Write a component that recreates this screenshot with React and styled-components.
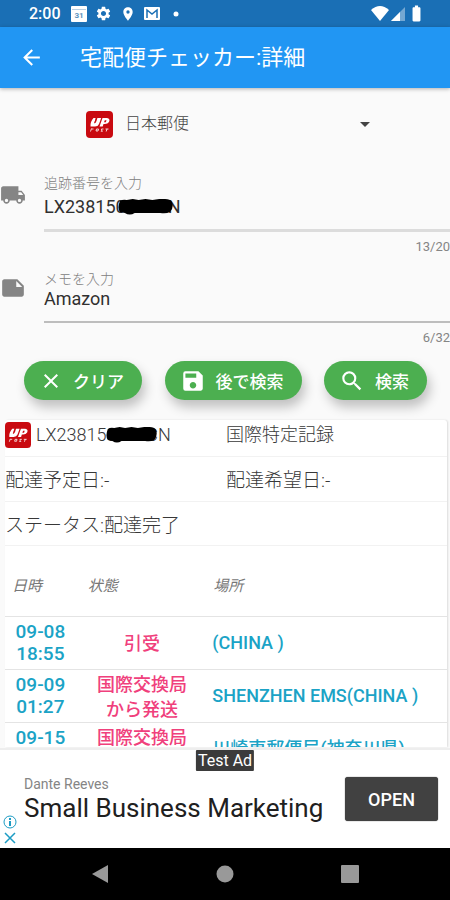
import React, { useState } from "react";
import styled, { createGlobalStyle } from "styled-components";
import {
  MdArrowBack,
  MdArrowDropDown,
  MdBatteryFull,
  MdClose,
  MdLocalShipping,
  MdLocationOn,
  MdNote,
  MdSave,
  MdSearch,
  MdSettings,
} from "react-icons/md";

const GlobalStyle = createGlobalStyle`
  * { box-sizing: border-box; }
  body {
    margin: 0;
    background: #fafafa;
    color: #303030;
    font-family: Roboto, "Noto Sans CJK JP", sans-serif;
  }
  button, input, select { font: inherit; }
`;

const Screen = styled.div`
  display: flex;
  flex-direction: column;
  height: 100vh;
  overflow: hidden;
`;

const StatusBar = styled.div`
  display: flex;
  align-items: center;
  flex: none;
  gap: 8px;
  height: 27px;
  padding: 0 24px 0 29px;
  background: #1a6fb5;
  color: #fff;
`;

const Clock = styled.time`
  margin-right: 2px;
  font-size: 16px;
  font-weight: 500;
`;

const StatusIcons = styled.div`
  display: flex;
  align-items: center;
  gap: ${(p) => p.$gap}px;
  margin-left: ${(p) => (p.$end ? "auto" : "0")};
  svg { display: block; }
`;

const AppBar = styled.header`
  display: flex;
  align-items: center;
  flex: none;
  gap: 36px;
  height: 61px;
  padding: 0 19px;
  background: #2196f3;
  color: #fff;
  box-shadow: 0 1px 4px rgba(0, 0, 0, 0.3);
`;

const IconButton = styled.button`
  display: flex;
  padding: 0;
  border: 0;
  background: none;
  color: inherit;
`;

const Title = styled.h1`
  margin: 0;
  font-size: 22px;
  font-weight: 400;
  line-height: 32px;
`;

const CarrierRow = styled.div`
  display: flex;
  align-items: center;
  flex: none;
  gap: 12px;
  height: 72px;
  padding: 0 73px 0 86px;
`;

const SelectBox = styled.div`
  display: grid;
  flex: 1;
  align-items: center;
  > * { grid-area: 1 / 1; }
  svg {
    justify-self: end;
    color: #444;
    pointer-events: none;
  }
`;

const CarrierSelect = styled.select`
  width: 100%;
  padding: 0;
  border: 0;
  background: none;
  color: #444;
  appearance: none;
  font-size: 16px;
  font-weight: 300;
  line-height: 24px;
`;

const FieldRow = styled.div`
  display: grid;
  grid-template-columns: 28px 1fr;
  column-gap: 16px;
  flex: none;
  padding-top: 14px;
`;

const FieldIcon = styled.span`
  padding-top: ${(p) => p.$top}px;
  color: #858585;
  svg { display: block; }
`;

const FieldBody = styled.div`
  display: flex;
  flex-direction: column;
`;

const FieldLabel = styled.label`
  color: #808080;
  font-size: 14px;
  font-weight: 300;
  line-height: 18px;
`;

const InputWrap = styled.div`
  position: relative;
  padding: ${(p) => p.$top}px 0 13px;
  border-bottom: ${(p) => (p.$thick ? "3px solid #dcdcdc" : "2px solid #bdbdbd")};
`;

const TextInput = styled.input`
  display: block;
  width: 100%;
  height: 20px;
  padding: 0;
  border: 0;
  outline: 0;
  background: none;
  color: #303030;
  font-size: 18px;
`;

const Counter = styled.span`
  align-self: flex-end;
  margin-top: 6px;
  color: #858585;
  font-size: 13px;
  line-height: 18px;
`;

const Scribble = styled.svg`
  position: absolute;
  top: ${(p) => p.$top}px;
  left: ${(p) => p.$left}px;
`;

const Actions = styled.div`
  display: flex;
  justify-content: space-between;
  flex: none;
  padding: 14px 23px 20px 24px;
`;

const ActionButton = styled.button`
  display: flex;
  align-items: center;
  gap: 10px;
  height: 39px;
  padding: 0 18px 0 15px;
  border: 0;
  border-radius: 20px;
  background: #4caf50;
  color: #fff;
  font-size: 17px;
  font-weight: 500;
  box-shadow: 3px 7px 12px rgba(0, 0, 0, 0.24);
`;

const Card = styled.main`
  flex: 1;
  min-height: 0;
  margin: 0 3px 1px 5px;
  overflow: hidden;
  border-radius: 3px 3px 0 0;
  background: #fff;
  box-shadow: 1px 0 2px rgba(0, 0, 0, 0.12);
`;

const InfoRow = styled.div`
  display: grid;
  grid-template-columns: 1fr 1fr;
  align-items: center;
  height: ${(p) => p.$height}px;
  padding-top: ${(p) => (p.$first ? 0 : 4)}px;
  padding-bottom: ${(p) => (p.$first ? 6 : 0)}px;
  border-bottom: 1px solid #f2f2f2;
  color: #383838;
  font-size: ${(p) => (p.$first ? 18 : 19)}px;
  font-weight: 300;
  line-height: 28px;
`;

const Parcel = styled.div`
  position: relative;
  display: flex;
  align-items: center;
  gap: 5px;
  height: 28px;
  font-size: 18px;
`;

const History = styled.table`
  width: 100%;
  table-layout: fixed;
  border-collapse: collapse;
`;

const Heading = styled.th`
  width: ${(p) => p.$width};
  height: 70px;
  padding: 8px 0 0 ${(p) => p.$left}px;
  border-bottom: 1px solid #e4e4e4;
  color: #777;
  font-size: 15px;
  font-style: italic;
  font-weight: 400;
  text-align: left;
`;

const Cell = styled.td`
  height: 53px;
  padding: ${(p) => p.$drop || 0}px ${(p) => p.$pad}px 0;
  border-bottom: 1px solid #e4e4e4;
  color: ${(p) => p.$color};
  font-size: ${(p) => p.$size}px;
  font-weight: 500;
  line-height: ${(p) => p.$line}px;
  text-align: ${(p) => p.$align};
`;

const Ad = styled.aside`
  position: relative;
  display: flex;
  align-items: center;
  justify-content: space-between;
  flex: none;
  height: 100px;
  padding: 0 12px 0 3px;
  border-top: 2px solid #eee;
  background: #fff;
`;

const AdMarks = styled.div`
  display: flex;
  flex-direction: column;
  align-self: flex-end;
  gap: 2px;
  width: 14px;
  padding-bottom: 3px;
  color: #1c9cc4;
  svg { display: block; }
`;

const AdCopy = styled.div`
  flex: 1;
  padding-left: 7px;
  white-space: nowrap;
`;

const Advertiser = styled.div`
  color: #858585;
  font-size: 14px;
  line-height: 18px;
`;

const AdHeadline = styled.div`
  color: #202020;
  font-size: 26px;
  line-height: 30px;
`;

const OpenButton = styled.button`
  width: 93px;
  height: 44px;
  padding: 0;
  border: 0;
  border-radius: 3px;
  background: #414141;
  color: #fff;
  font-size: 18px;
  font-weight: 500;
  box-shadow: 0 0 1px #222;
`;

const TestBadge = styled.span`
  position: absolute;
  top: 0;
  left: 50%;
  padding: 0 2px;
  border-radius: 1px;
  background: #3b3b3b;
  color: #fff;
  font-size: 16px;
  line-height: 21px;
  transform: translateX(-50%);
`;

const NavBar = styled.nav`
  display: grid;
  grid-template-columns: repeat(3, 125px);
  justify-content: center;
  align-items: center;
  flex: none;
  height: 52px;
  background: #000;
  color: #999;
  button { justify-content: center; }
`;

function PostLogo({ size }) {
  return (
    <svg width={size} height={size} viewBox="0 0 27 27" role="img" aria-label="日本郵便">
      <rect width="27" height="27" rx="4" fill="#c90a10" />
      <path d="M7.500 7H9.800L8.200 12.200Q9.800 12.200 10.500 10L11.400 7H15.200L13 13Q12 15.500 9 15.500H4.500Q4 11 7.500 7Z" fill="#fff" />
      <path d="M10.300 7L8.600 12.200" stroke="#c90a10" strokeWidth="0.700" />
      <path d="M16.500 7H21Q24.500 7.500 23 11Q21.500 13.500 17.500 13L16.700 15.500H13.500Z" fill="#fff" />
      <path d="M18.800 9.200H20.500L19.800 11.200H18Z" fill="#c90a10" />
      <path
        d="M5.500 17.500L4.500 20.500M5.500 18H7.500M10.500 18H12.500L12 20H10ZM17.500 18H15.500L15.700 19.500 15 20.200H16.800M19.500 18H22.500M21 18L20.200 20.500"
        fill="none"
        stroke="#fff"
        strokeWidth="1"
        opacity=".8"
      />
    </svg>
  );
}

function Redaction({ top, left, width }) {
  return (
    <Scribble $top={top} $left={left} width={width} height="16" viewBox="0 0 56 16" preserveAspectRatio="none" aria-hidden="true">
      <path
        fill="#000"
        d="M2 2 Q5 0 9 1 L15 0 21 1 28 0 35 1 42 0 48 0 Q53 0 55 3 Q57 9 53 13 Q49 15 43 14 L38 14 31 14 25 14 17 14 Q12 17 7 14 L2 13 Q-1 9 2 2Z"
      />
    </Scribble>
  );
}

const events = [
  { date: "09-08", time: "18:55", status: "引受", place: "(CHINA )" },
  { date: "09-09", time: "01:27", status: "国際交換局から発送", place: "SHENZHEN EMS(CHINA )" },
  { date: "09-15", time: "12:10", status: "国際交換局に到着", place: "川崎東郵便局(神奈川県)" },
];

export default function App() {
  const [number, setNumber] = useState("LX238150000CN");
  const [memo, setMemo] = useState("Amazon");

  return (
    <Screen>
      <GlobalStyle />
      <StatusBar>
        <Clock>2:00</Clock>
        <StatusIcons $gap={8}>
          <svg width="16" height="16" viewBox="0 0 16 16">
            <rect width="16" height="16" rx="1" fill="#fff" />
            <path d="M1 3.500h14" stroke="#b9cfe2" />
            <text x="8" y="12" fontSize="8" fontWeight="700" textAnchor="middle" fill="#5d93bd">31</text>
          </svg>
          <MdSettings size={17} />
          <MdLocationOn size={16} />
          <svg width="16" height="13" viewBox="0 0 16 13">
            <rect width="16" height="13" rx="1" fill="#fff" />
            <path d="M3 11V3l5 4 5-4v8" fill="none" stroke="#1a6fb5" strokeWidth="1.500" />
          </svg>
          <svg width="16" height="6" viewBox="0 0 16 6">
            <circle cx="8" cy="3" r="2.500" fill="#fff" />
          </svg>
        </StatusIcons>
        <StatusIcons $gap={2} $end>
          <svg width="18" height="15" viewBox="0 0 18 15">
            <path d="M0 4Q9-4 18 4L9 15Z" fill="#fff" />
          </svg>
          <svg width="14" height="14" viewBox="0 0 14 14">
            <path d="M0 14L14 0V14Z" fill="#fff" opacity=".4" />
            <path d="M0 14L9 5V14Z" fill="#fff" />
          </svg>
          <MdBatteryFull size={19} />
        </StatusIcons>
      </StatusBar>

      <AppBar>
        <IconButton aria-label="戻る"><MdArrowBack size={25} /></IconButton>
        <Title>宅配便チェッカー:詳細</Title>
      </AppBar>

      <CarrierRow>
        <PostLogo size={27} />
        <SelectBox>
          <CarrierSelect aria-label="配送会社">
            <option>日本郵便</option>
          </CarrierSelect>
          <MdArrowDropDown size={24} />
        </SelectBox>
      </CarrierRow>

      <FieldRow>
        <FieldIcon $top={8}><MdLocalShipping size={26} /></FieldIcon>
        <FieldBody>
          <FieldLabel htmlFor="number">追跡番号を入力</FieldLabel>
          <InputWrap $top={4} $thick>
            <TextInput id="number" value={number} maxLength={20} onChange={(e) => setNumber(e.target.value)} />
            <Redaction top={7} left={74} width={55} />
          </InputWrap>
          <Counter>{number.length}/20</Counter>
        </FieldBody>
      </FieldRow>

      <FieldRow>
        <FieldIcon $top={5}><MdNote size={26} /></FieldIcon>
        <FieldBody>
          <FieldLabel htmlFor="memo">メモを入力</FieldLabel>
          <InputWrap $top={0}>
            <TextInput id="memo" value={memo} maxLength={32} onChange={(e) => setMemo(e.target.value)} />
          </InputWrap>
          <Counter>{memo.length}/32</Counter>
        </FieldBody>
      </FieldRow>

      <Actions>
        <ActionButton><MdClose size={24} />クリア</ActionButton>
        <ActionButton><MdSave size={26} />後で検索</ActionButton>
        <ActionButton><MdSearch size={26} />検索</ActionButton>
      </Actions>

      <Card>
        <InfoRow $height={37} $first>
          <Parcel>
            <PostLogo size={26} />
            <span>LX238150000CN</span>
            <Redaction top={6} left={101} width={51} />
          </Parcel>
          <span>国際特定記録</span>
        </InfoRow>
        <InfoRow $height={45}>
          <span>配達予定日:-</span>
          <span>配達希望日:-</span>
        </InfoRow>
        <InfoRow $height={44}>
          <span>ステータス:配達完了</span>
        </InfoRow>
        <History>
          <thead>
            <tr>
              <Heading $width="16%" $left={7}>日時</Heading>
              <Heading $width="30%" $left={12}>状態</Heading>
              <Heading $width="54%" $left={5}>場所</Heading>
            </tr>
          </thead>
          <tbody>
            {events.map((e) => (
              <tr key={e.date}>
                <Cell $color="#1ba3c6" $align="center" $line={22} $pad={8} $size={19}>{e.date} {e.time}</Cell>
                <Cell $color="#f0407c" $align="center" $line={25} $pad={14} $size={18} $drop={2}>{e.status}</Cell>
                <Cell $color="#1ba3c6" $align="left" $line={26} $pad={4} $size={18}>{e.place}</Cell>
              </tr>
            ))}
          </tbody>
        </History>
      </Card>

      <Ad>
        <AdMarks>
          <svg width="14" height="14" viewBox="0 0 14 14" fill="none" stroke="currentColor">
            <circle cx="7" cy="7" r="6" />
            <path d="M7 3v2M7 6v5" strokeWidth="2" />
          </svg>
          <svg width="14" height="14" viewBox="0 0 14 14" stroke="currentColor" strokeWidth="1.500">
            <path d="M2 2l10 10M12 2L2 12" />
          </svg>
        </AdMarks>
        <AdCopy>
          <Advertiser>Dante Reeves</Advertiser>
          <AdHeadline>Small Business Marketing</AdHeadline>
        </AdCopy>
        <OpenButton>OPEN</OpenButton>
        <TestBadge>Test Ad</TestBadge>
      </Ad>

      <NavBar>
        <IconButton aria-label="戻る">
          <svg width="18" height="18" viewBox="0 0 18 18"><path d="M17 0V18L1 9Z" fill="currentColor" /></svg>
        </IconButton>
        <IconButton aria-label="ホーム">
          <svg width="18" height="18" viewBox="0 0 18 18"><circle cx="9" cy="9" r="8.500" fill="currentColor" /></svg>
        </IconButton>
        <IconButton aria-label="最近のアプリ">
          <svg width="18" height="18" viewBox="0 0 18 18"><rect width="18" height="18" rx="1" fill="currentColor" /></svg>
        </IconButton>
      </NavBar>
    </Screen>
  );
}
